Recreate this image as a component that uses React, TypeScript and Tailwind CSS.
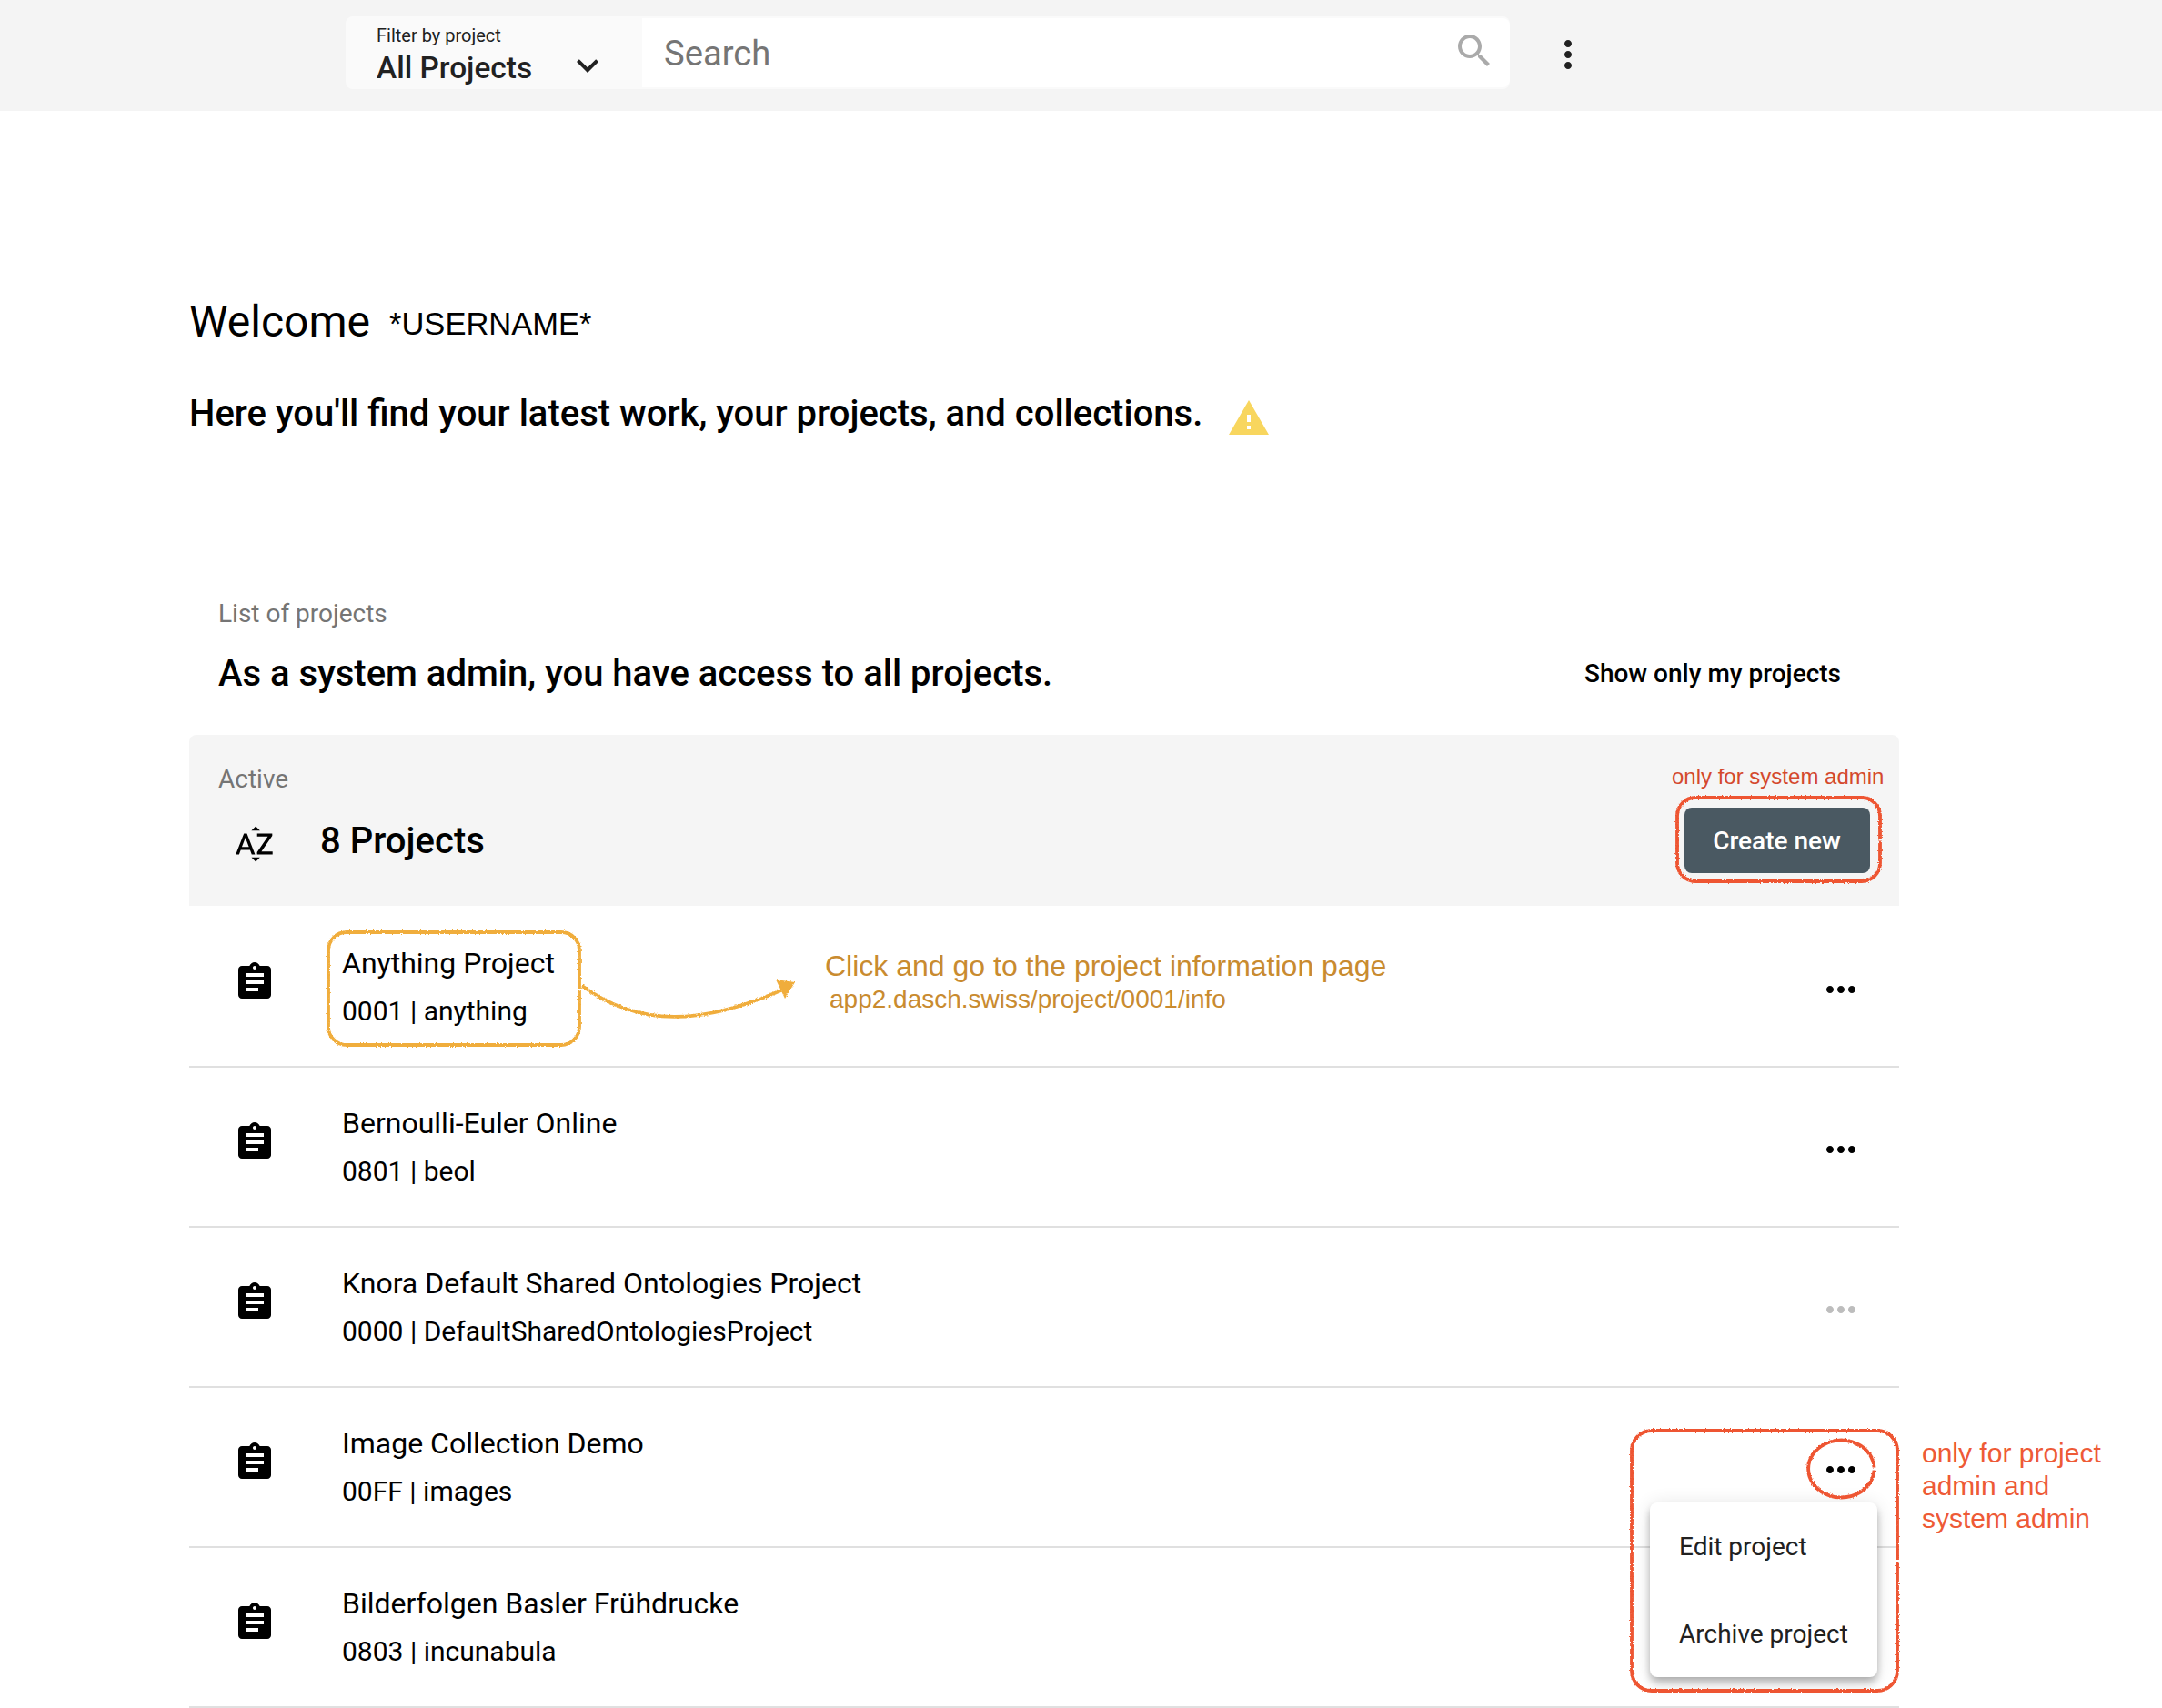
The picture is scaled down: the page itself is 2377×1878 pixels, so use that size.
import React from "react";

type Project = {
  name: string;
  code: string;
  short: string;
  disabled?: boolean;
};

const projects: Project[] = [
  { name: "Anything Project", code: "0001", short: "anything" },
  { name: "Bernoulli-Euler Online", code: "0801", short: "beol" },
  {
    name: "Knora Default Shared Ontologies Project",
    code: "0000",
    short: "DefaultSharedOntologiesProject",
    disabled: true,
  },
  { name: "Image Collection Demo", code: "00FF", short: "images" },
  { name: "Bilderfolgen Basler Frühdrucke", code: "0803", short: "incunabula" },
];

function Icon({ d, className }: { d: string; className?: string }) {
  return (
    <svg viewBox="0 0 24 24" fill="currentColor" className={`size-12 shrink-0 ${className ?? ""}`}>
      <path d={d} />
    </svg>
  );
}

const icons = {
  expand: "M16.59 8.59 12 13.17 7.41 8.59 6 10l6 6 6-6z",
  search:
    "M15.5 14h-.79l-.28-.27C15.41 12.59 16 11.11 16 9.5 16 5.91 13.09 3 9.5 3S3 5.91 3 9.5 5.91 16 9.5 16c1.61 0 3.09-.59 4.23-1.57l.27.28v.79l5 4.99L20.49 19l-4.99-5zm-6 0C7.01 14 5 11.99 5 9.5S7.01 5 9.5 5 14 7.01 14 9.5 11.99 14 9.5 14z",
  moreVert:
    "M12 8c1.1 0 2-.9 2-2s-.9-2-2-2-2 .9-2 2 .9 2 2 2zm0 2c-1.1 0-2 .9-2 2s.9 2 2 2 2-.9 2-2-.9-2-2-2zm0 6c-1.1 0-2 .9-2 2s.9 2 2 2 2-.9 2-2-.9-2-2-2z",
  moreHoriz:
    "M6 10c-1.1 0-2 .9-2 2s.9 2 2 2 2-.9 2-2-.9-2-2-2zm12 0c-1.1 0-2 .9-2 2s.9 2 2 2 2-.9 2-2-.9-2-2-2zm-6 0c-1.1 0-2 .9-2 2s.9 2 2 2 2-.9 2-2-.9-2-2-2z",
  warning: "M1 21h22L12 2 1 21zm12-3h-2v-2h2v2zm0-4h-2v-4h2v4z",
  sortAlpha:
    "M14.94 4.66h-4.72l2.36-2.36zm-4.69 14.71h4.66l-2.33 2.33zM6.1 6.27 1.6 17.73h1.84l.92-2.45h5.11l.92 2.45h1.84L7.74 6.27H6.1zm-1.13 7.37 1.94-5.18 1.94 5.18H4.97zm10.76 2.5h6.12v1.59h-8.53v-1.29l5.92-8.56h-5.88v-1.6h8.3v1.26l-5.93 8.6z",
  assignment:
    "M19 3h-4.18C14.4 1.84 13.3 1 12 1c-1.3 0-2.4.84-2.82 2H5c-1.1 0-2 .9-2 2v14c0 1.1.9 2 2 2h14c1.1 0 2-.9 2-2V5c0-1.1-.9-2-2-2zm-7 0c.55 0 1 .45 1 1s-.45 1-1 1-1-.45-1-1 .45-1 1-1zm2 14H7v-2h7v2zm3-4H7v-2h10v2zm0-4H7V7h10v2z",
};

/* Crayon-like edge shared by every hand-drawn annotation. */
function CrayonFilter() {
  return (
    <svg className="absolute size-0">
      <filter id="crayon" x="-5%" y="-5%" width="110%" height="110%" colorInterpolationFilters="sRGB">
        <feTurbulence type="fractalNoise" baseFrequency="0.6" numOctaves="2" seed="4" result="n" />
        <feDisplacementMap in="SourceGraphic" in2="n" scale="3" xChannelSelector="R" yChannelSelector="G" />
      </filter>
    </svg>
  );
}

/* Rounded outline whose stroke starts and ends at the middle of the right side, leaving a tiny gap. */
function CrayonBox({ width, height, radius, className }: { width: number; height: number; radius: number; className: string }) {
  const l = 2;
  const r = width - 2;
  const b = height - 2;
  const m = height / 2;
  const q = radius;
  const a = `A${q} ${q} 0 0 1`;
  const d = `M${r} ${m + 1.5}V${b - q}${a} ${r - q} ${b}H${l + q}${a} ${l} ${b - q}V${l + q}${a} ${l + q} ${l}H${r - q}${a} ${r} ${l + q}V${m - 1}`;
  return (
    <svg width={width} height={height} fill="none" stroke="currentColor" className={`pointer-events-none absolute overflow-visible ${className}`}>
      <path d={d} strokeWidth="3.8" filter="url(#crayon)" />
    </svg>
  );
}

function Header() {
  return (
    <header className="flex h-[122px] items-start bg-[#f4f4f4] pl-[380px] pt-[18px] text-[#212121]">
      <div className="flex h-20 w-[1280px] rounded-lg bg-[#fafafa]">
        <div className="flex w-[326px] pl-[34px] pt-[9px]">
          <div className="w-[208px]">
            <div className="text-[20px] leading-6">Filter by project</div>
            <div className="text-[33.4px] font-medium leading-[47px]">All Projects</div>
          </div>
          <Icon d={icons.expand} className="mt-[21px]" />
        </div>
        <div className="my-0.5 flex flex-1 items-center justify-between rounded-r-lg bg-white pl-6 pr-[15px]">
          <span className="mt-0.5 text-[38.2px] leading-[48px] text-[#757575]">Search</span>
          <Icon d={icons.search} className="-mt-1 text-[#aaaaaa]" />
        </div>
      </div>
      <Icon d={icons.moreVert} className="ml-10 mt-[18px]" />
    </header>
  );
}

function ProjectMenu() {
  return (
    <div className="absolute left-[1606px] top-[126px] z-10 h-48 w-[250px] rounded-lg bg-white text-[28px] text-[#212121] shadow-[0_4px_8px_-2px_rgba(0,0,0,0.2),0_8px_10px_0_rgba(0,0,0,0.14),0_2px_20px_0_rgba(0,0,0,0.12)]">
      <div className="h-24 pl-8 leading-[97px]">Edit project</div>
      <div className="h-24 pl-8 leading-[97px]">Archive project</div>
    </div>
  );
}

function ProjectRow({ project, children }: { project: Project; children?: React.ReactNode }) {
  return (
    <div className="relative flex h-[176px] border-b-2 border-[#e0e0e0] pl-12 pr-10">
      <Icon d={icons.assignment} className="mt-[58px]" />
      <div className="ml-[72px] flex-1 pt-[41px]">
        <div className="text-[32px] leading-10">{project.name}</div>
        <div className="mt-[13px] text-[30px] leading-10">
          {project.code} | {project.short}
        </div>
      </div>
      <Icon d={icons.moreHoriz} className={project.disabled ? "mt-[66px] text-[#bdbdbd]" : "mt-[66px]"} />
      {children}
    </div>
  );
}

function InfoAnnotation() {
  return (
    <>
      <CrayonBox width={280} height={128} radius={20} className="left-[151px] top-[25px] text-[#f0ad3c]" />
      <svg width="240" height="50" className="absolute left-[431px] top-[76px] overflow-visible text-[#f0ad3c]">
        <g filter="url(#crayon)">
          <path d="M1 10 C64 56 134 53 222 14" fill="none" stroke="currentColor" strokeWidth="3.6" />
          <path d="M214 3 L235 6 L224 24 Z" fill="currentColor" />
        </g>
      </svg>
      <div className="absolute left-[699px] top-[46px] font-['Liberation_Sans'] text-[#c98b2f]">
        <div className="text-[32px] leading-9">Click and go to the project information page</div>
        <div className="ml-[5px] mt-[3px] text-[28px] leading-8">app2.dasch.swiss/project/0001/info</div>
      </div>
    </>
  );
}

function AdminAnnotation() {
  return (
    <>
      <CrayonBox width={296} height={290} radius={22} className="left-[1584px] top-[45px] z-20 text-[#ee5532]" />
      <svg width="76" height="67" fill="none" stroke="currentColor" className="absolute left-[1778px] top-[56px] z-20 overflow-visible text-[#ee5532]">
        <path d="M74.5 34.5A36.2 31.5 0 1 1 74.5 31.5" strokeWidth="3.8" filter="url(#crayon)" />
      </svg>
      <div className="absolute left-[1905px] top-[54px] w-[220px] font-['Liberation_Sans'] text-[30px] leading-9 text-[#ee5a36]">
        only for project admin and system admin
      </div>
    </>
  );
}

export default function App() {
  return (
    <div className="relative h-[1878px] w-[2377px] overflow-hidden bg-white font-['Roboto',sans-serif] text-black">
      <CrayonFilter />
      <Header />
      <main className="ml-[208px] w-[1880px] pt-[204px]">
        <div className="flex items-baseline gap-[21px]">
          <h1 className="text-[48px] leading-[56px]">Welcome</h1>
          <span className="-translate-y-0.5 font-['Liberation_Sans'] text-[34.5px] leading-10">*USERNAME*</span>
        </div>
        <div className="mt-[49px] flex">
          <h2 className="w-[1141px] text-[40px] font-medium leading-[48px]">
            Here you'll find your latest work, your projects, and collections.
          </h2>
          <Icon d={icons.warning} className="mt-[5px] text-[#f8d65e]" />
        </div>

        <section className="mt-[175px]">
          <div className="flex h-[149px] flex-col px-8">
            <p className="text-[28px] leading-8 text-[#757575]">List of projects</p>
            <div className="mt-[26px] flex justify-between pr-8">
              <h3 className="text-[40px] font-medium leading-[48px]">As a system admin, you have access to all projects.</h3>
              <span className="text-[28px] font-medium leading-[48px]">Show only my projects</span>
            </div>
          </div>

          <div className="relative h-[188px] rounded-t-lg bg-[#f5f5f5] px-8 pt-[33px]">
            <p className="text-[28px] leading-8 text-[#757575]">Active</p>
            <div className="mt-[15px] flex items-center">
              <Icon d={icons.sortAlpha} className="ml-4 mt-2" />
              <h3 className="ml-12 flex-1 pt-0.5 text-[40px] font-medium leading-[48px]">8 Projects</h3>
              <button className="h-[72px] w-[204px] rounded-lg bg-[#4a5962] pr-px pt-0.5 text-[28px] font-medium text-white">Create new</button>
            </div>
            <div className="absolute left-[1630px] top-8 whitespace-nowrap font-['Liberation_Sans'] text-[24px] leading-7 text-[#d4492d]">
              only for system admin
            </div>
            <CrayonBox width={227} height={96} radius={20} className="left-[1634px] top-[67px] text-[#ee5532]" />
          </div>

          <div className="mt-0.5">
            {projects.map((p, i) => (
              <ProjectRow key={p.code} project={p}>
                {i === 0 && <InfoAnnotation />}
                {i === 3 && (
                  <>
                    <ProjectMenu />
                    <AdminAnnotation />
                  </>
                )}
              </ProjectRow>
            ))}
          </div>
        </section>
      </main>
    </div>
  );
}
